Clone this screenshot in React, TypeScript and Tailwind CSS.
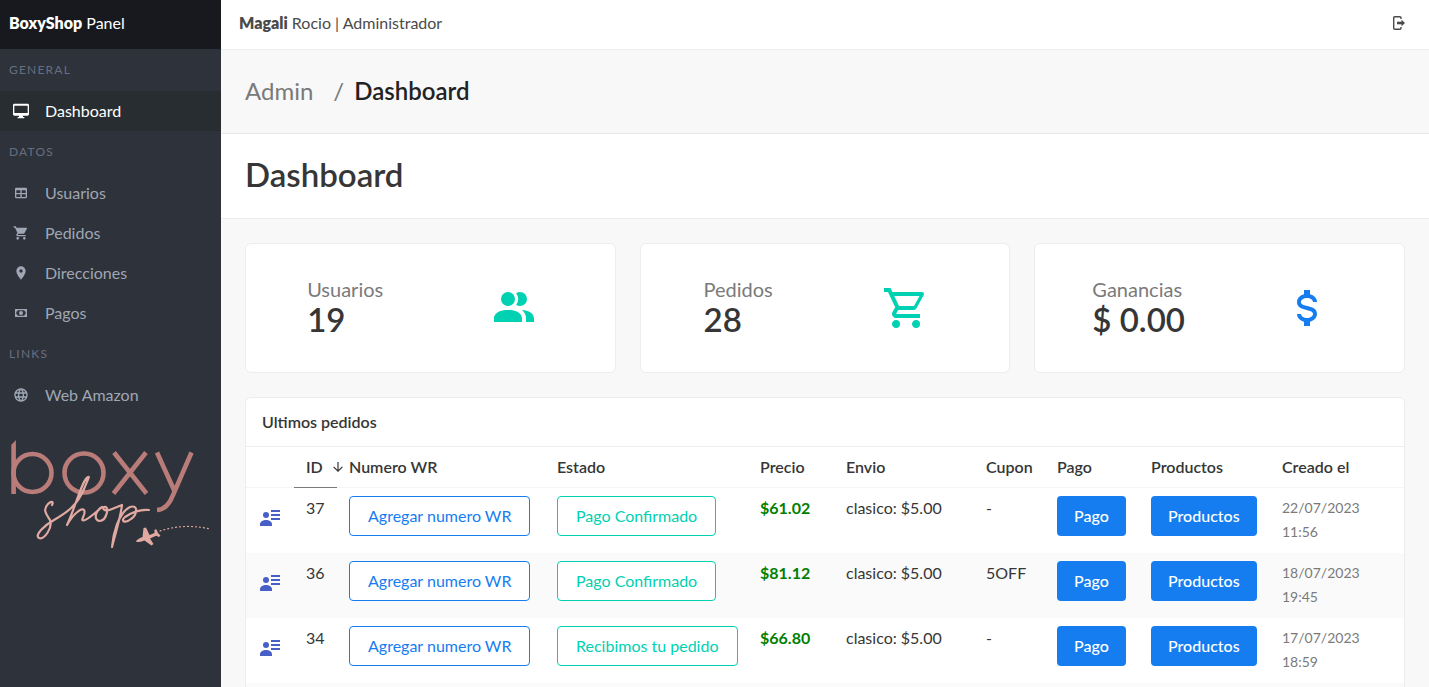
import type { ReactNode } from "react";
import { MdLanguage } from "react-icons/md";

const paths = {
  desktop:
    "M22,15H2V4H22M22,1H2C0.9,1 0,1.9 0,3V17A2,2 0 0,0 2,19H9V21H7V23H17V21H15V19H22A2,2 0 0,0 24,17V3C24,1.9 23.1,1 22,1Z",
  table:
    "M5,4H19A2,2 0 0,1 21,6V18A2,2 0 0,1 19,20H5A2,2 0 0,1 3,18V6A2,2 0 0,1 5,4M5,8V12H11V8H5M13,8V12H19V8H13M5,14V18H11V14H5M13,14V18H19V14H13Z",
  cart: "M17,18C15.89,18 15,18.89 15,20A2,2 0 0,0 17,22A2,2 0 0,0 19,20C19,18.89 18.1,18 17,18M1,2V4H3L6.6,11.59L5.24,14.04C5.09,14.32 5,14.65 5,15A2,2 0 0,0 7,17H19V15H7.42A0.25,0.25 0 0,1 7.17,14.75C7.17,14.7 7.18,14.66 7.2,14.63L8.1,13H15.55C16.3,13 16.96,12.58 17.3,11.97L20.88,5.5C20.95,5.34 21,5.17 21,5A1,1 0 0,0 20,4H5.21L4.27,2M7,18C5.89,18 5,18.89 5,20A2,2 0 0,0 7,22A2,2 0 0,0 9,20C9,18.89 8.1,18 7,18Z",
  marker:
    "M12,11.5A2.5,2.5 0 0,1 9.5,9A2.5,2.5 0 0,1 12,6.5A2.5,2.5 0 0,1 14.5,9A2.5,2.5 0 0,1 12,11.5M12,2A7,7 0 0,0 5,9C5,14.25 12,22 12,22C12,22 19,14.25 19,9A7,7 0 0,0 12,2Z",
  cash: "M3,6H21V18H3V6M12,9A3,3 0 0,1 15,12A3,3 0 0,1 12,15A3,3 0 0,1 9,12A3,3 0 0,1 12,9M7,8A2,2 0 0,1 5,10V14A2,2 0 0,1 7,16H17A2,2 0 0,1 19,14V10A2,2 0 0,1 17,8H7Z",
  users:
    "M16 17V19H2V17S2 13 9 13 16 17 16 17M12.5 7.5A3.5 3.5 0 1 0 9 11A3.5 3.5 0 0 0 12.5 7.5M15.94 13A5.32 5.32 0 0 1 18 17V19H22V17S22 13.37 15.94 13M15 4A3.39 3.39 0 0 0 13.07 4.59A5 5 0 0 1 13.07 10.41A3.39 3.39 0 0 0 15 11A3.5 3.5 0 0 0 15 4Z",
  cartOutline:
    "M17,18A2,2 0 0,1 19,20A2,2 0 0,1 17,22C15.89,22 15,21.1 15,20C15,18.89 15.89,18 17,18M1,2H4.27L5.21,4H20A1,1 0 0,1 21,5C21,5.17 20.95,5.34 20.88,5.5L17.3,11.97C16.96,12.58 16.3,13 15.55,13H8.1L7.2,14.63L7.17,14.75A0.25,0.25 0 0,0 7.42,15H19V17H7C5.89,17 5,16.1 5,15C5,14.65 5.09,14.32 5.24,14.04L6.6,11.59L3,4H1V2M7,18A2,2 0 0,1 9,20A2,2 0 0,1 7,22C5.89,22 5,21.1 5,20C5,18.89 5.89,18 7,18M16,11L18.78,6H6.14L8.5,11H16Z",
  dollar:
    "M7,15H9C9,16.08 10.37,17 12,17C13.63,17 15,16.08 15,15C15,13.9 13.96,13.5 11.76,12.97C9.64,12.44 7,11.78 7,9C7,7.21 8.47,5.69 10.5,5.18V3H13.5V5.18C15.53,5.69 17,7.21 17,9H15C15,7.92 13.63,7 12,7C10.37,7 9,7.92 9,9C9,10.1 10.04,10.5 12.24,11.03C14.36,11.56 17,12.22 17,15C17,16.79 15.53,18.31 13.5,18.82V21H10.5V18.82C8.47,18.31 7,16.79 7,15Z",
};

type IconName = keyof typeof paths;

function Icon({ name, className }: { name: IconName; className: string }) {
  return (
    <svg viewBox="0 0 24 24" fill="currentColor" aria-hidden="true" className={className}>
      <path fillRule="evenodd" d={paths[name]} />
    </svg>
  );
}

function LogoutIcon() {
  return (
    <svg viewBox="0 0 14 16" className="h-4 w-3.5" fill="none" stroke="currentColor" aria-hidden="true">
      <path d="M9 4V2.8Q9 1.7 7.9 1.7H2.8Q1.7 1.7 1.7 2.8V13.2Q1.7 14.3 2.8 14.3H7.9Q9 14.3 9 13.2V12" strokeWidth="1.4" />
      <path d="M5 8H10" strokeWidth="2.6" />
      <path d="M9.5 4.8L13 8L9.5 11.2Z" fill="currentColor" stroke="none" />
    </svg>
  );
}

function DetailsIcon() {
  return (
    <svg viewBox="0 0 20 16" className="h-4 w-5" fill="currentColor" aria-hidden="true">
      <circle cx="6" cy="5" r="3" />
      <path d="M0 16V14.2C0 11.6 3 10 6 10S12 11.6 12 14.2V16Z" />
      <path d="M11 0H20V2H11ZM11 4H20V6H11ZM11 8H20V10H11Z" />
    </svg>
  );
}

function SortArrow() {
  return (
    <svg viewBox="0 0 10 10" className="h-2.5 w-2.5" fill="none" stroke="currentColor" strokeWidth="1.2" aria-hidden="true">
      <path d="M5 0V9M0.6 4.8L5 9.2L9.4 4.8" />
    </svg>
  );
}

function Logo() {
  return (
    <svg viewBox="0 5 221 120" className="block w-full" role="img" aria-label="boxy shop">
      <g fill="none" stroke="#b97c79" strokeWidth="4.6">
        <path d="M13.6 64V14.5" />
        <circle cx="32.5" cy="43" r="19" />
        <circle cx="84" cy="43" r="19.5" />
        <path d="M114 22.500L146.500 63.500M146 22.500L113.500 63.500" />
        <path d="M157 22.500L174.500 61M191.500 22.500L173 65Q167.500 79.500 157 80" />
      </g>
      <path fill="#b97c79" d="M11.3 15L15.9 10V15Z" />
      <g fill="none" stroke="#e0aaa2" strokeLinecap="round" strokeLinejoin="round">
        <path
          strokeWidth="2.2"
          d="M52 75C54 71 51 71 48 74C42 80 47 85 50 90C53 98 44 110 39 108C34 105 45 95 54 90C66 83 77 76 84 59C88 49 90 46 88 47C82 50 77 73 67 95C73 84 82 77 84 80C87 84 78 92 85 90C90 88 96 82 102 77C94 82 94 91 100 91C107 90 110 75 104 77C101 79 106 82 112 79L122 75C120 90 116 101 112 117C113 105 118 83 130 77C139 74 137 85 131 89C125 94 120 91 125 87C131 83 139 79 149 80"
        />
        <path d="M160 101Q184 93 210 99" strokeWidth="1.2" strokeDasharray="1 3" />
      </g>
      <path
        fill="#e0aaa2"
        d="M136 111.500Q137 109 142.500 107L143.500 98L146 97.500L149.500 105L154.500 103L154.500 99.500L156.500 99.500L158 103L160.500 105.500L159 107L156 105.800L150 108.500L153.500 114L151.500 115.500L144.500 110.500Q138 113 136 111.500Z"
      />
    </svg>
  );
}

function NavSection({ title, children }: { title: string; children: ReactNode }) {
  return (
    <section>
      <h2 className="px-[9px] py-3 text-xs leading-[18px] tracking-widest text-[#666f80] uppercase">{title}</h2>
      <ul>{children}</ul>
    </section>
  );
}

function NavItem({ icon, label, active = false }: { icon: ReactNode; label: string; active?: boolean }) {
  return (
    <li>
      <a
        href="#"
        aria-current={active ? "page" : undefined}
        className={
          active ? "flex h-10 items-center bg-[#282d32] text-white" : "flex h-10 items-center text-[#9fa7b5]"
        }
      >
        <span className="flex w-[45px] pl-[13px]">{icon}</span>
        {label}
      </a>
    </li>
  );
}

function StatCard({ label, value, icon, tint }: { label: string; value: string; icon: IconName; tint: string }) {
  return (
    <article className="flex h-[130px] items-center justify-around rounded-md border border-[#ededed] bg-white px-4">
      <div className="pb-0.5">
        <h3 className="text-xl leading-6 text-[#7a7a7a]">{label}</h3>
        <p className="text-[33px] leading-9 font-semibold text-[#363636]">{value}</p>
      </div>
      <span className={"flex w-20 justify-center " + tint}>
        <Icon name={icon} className="size-12" />
      </span>
    </article>
  );
}

const orders = [
  { id: 37, state: "Pago Confirmado", price: "$61.02", coupon: "-", date: "22/07/2023", time: "11:56" },
  { id: 36, state: "Pago Confirmado", price: "$81.12", coupon: "5OFF", date: "18/07/2023", time: "19:45" },
  { id: 34, state: "Recibimos tu pedido", price: "$66.80", coupon: "-", date: "17/07/2023", time: "18:59" },
];

const th = "px-3 py-2 font-semibold";
const td = "px-3 py-2";
const solid = "h-10 rounded bg-[#167df0] px-[17px] pb-px font-medium text-white";
const outline = "h-10 rounded border bg-white px-[18px] pb-px whitespace-nowrap";

export default function App() {
  return (
    <div className="flex h-screen overflow-hidden bg-[#f8f8f8] font-['Lato',sans-serif] text-base leading-6 text-[#363636]">
      <aside className="w-[221px] shrink-0 bg-[#2e323a]">
        <div className="flex h-[49px] items-center bg-[#17191e] px-[9px] pb-1 text-white">
          <p>
            <b className="font-extrabold">BoxyShop</b> Panel
          </p>
        </div>
        <nav aria-label="Principal">
          <NavSection title="General">
            <NavItem active label="Dashboard" icon={<Icon name="desktop" className="size-4" />} />
          </NavSection>
          <NavSection title="Datos">
            <NavItem label="Usuarios" icon={<Icon name="table" className="size-4" />} />
            <NavItem label="Pedidos" icon={<Icon name="cart" className="size-4" />} />
            <NavItem label="Direcciones" icon={<Icon name="marker" className="size-4" />} />
            <NavItem label="Pagos" icon={<Icon name="cash" className="size-4" />} />
          </NavSection>
          <NavSection title="Links">
            <NavItem label="Web Amazon" icon={<MdLanguage className="size-4" />} />
          </NavSection>
        </nav>
        <div className="pt-5">
          <Logo />
        </div>
      </aside>

      <div className="min-w-0 flex-1">
        <header className="flex h-[50px] items-center justify-between border-b border-[#ededed] bg-white pr-[23px] pb-1 pl-[18px] text-[#4a4a4a]">
          <p>
            <b className="font-extrabold">Magali</b> Rocio | Administrador
          </p>
          <button type="button" aria-label="Salir">
            <LogoutIcon />
          </button>
        </header>

        <nav aria-label="Ruta" className="flex h-[84px] items-center border-b border-[#e8e8e8] px-6 pb-0.5">
          <ol className="flex gap-5 text-2xl leading-8 text-[#7a7a7a]">
            <li>
              <a href="#">Admin</a>
            </li>
            <li className="flex gap-2.5 font-semibold text-[#222]">
              <span className="font-normal text-[#7a7a7a]">/</span>
              Dashboard
            </li>
          </ol>
        </nav>

        <div className="flex h-[85px] items-center border-b border-[#ededed] bg-white px-6 pb-1">
          <h1 className="text-[33px] leading-9 font-semibold">Dashboard</h1>
        </div>

        <main className="p-6">
          <div className="grid grid-cols-3 gap-6">
            <StatCard label="Usuarios" value="19" icon="users" tint="text-[#00d1b2]" />
            <StatCard label="Pedidos" value="28" icon="cartOutline" tint="text-[#00d1b2]" />
            <StatCard label="Ganancias" value="$ 0.00" icon="dollar" tint="text-[#167df0]" />
          </div>

          <section className="mt-6 rounded-md border border-[#ededed] bg-white">
            <h2 className="border-b border-[#ededed] px-4 py-3 font-semibold">Ultimos pedidos</h2>
            <table className="w-full table-fixed border-separate border-spacing-0 text-left">
              <colgroup>
                <col className="w-[48px]" />
                <col className="w-[43px]" />
                <col className="w-[208px]" />
                <col className="w-[203px]" />
                <col className="w-[86px]" />
                <col className="w-[140px]" />
                <col className="w-[71px]" />
                <col className="w-[94px]" />
                <col className="w-[131px]" />
                <col />
              </colgroup>
              <thead>
                <tr className="[&>th]:border-b [&>th]:border-[#f5f5f5]">
                  <th className={th} aria-label="Detalle" />
                  <th className={th + " border-[#7a7a7a]!"} aria-sort="descending">
                    <span className="flex items-center gap-2.5">
                      ID
                      <span className="shrink-0">
                        <SortArrow />
                      </span>
                    </span>
                  </th>
                  <th className={th}>Numero WR</th>
                  <th className={th}>Estado</th>
                  <th className={th}>Precio</th>
                  <th className={th}>Envio</th>
                  <th className={th}>Cupon</th>
                  <th className={th}>Pago</th>
                  <th className={th}>Productos</th>
                  <th className={th}>Creado el</th>
                </tr>
              </thead>
              <tbody>
                {orders.map((o) => (
                  <tr key={o.id} className="h-[65px] align-top even:bg-[#fafafa]">
                    <td className="px-3 pt-[22px]">
                      <a href="#" aria-label={"Ver pedido " + o.id} className="block pl-[2px] text-[#485fc7]">
                        <DetailsIcon />
                      </a>
                    </td>
                    <td className={td}>{o.id}</td>
                    <td className={td}>
                      <button type="button" className={outline + " border-[#167df0] text-[#167df0]"}>
                        Agregar numero WR
                      </button>
                    </td>
                    <td className={td}>
                      <button type="button" className={outline + " border-[#00d1b2] text-[#00d1b2]"}>
                        {o.state}
                      </button>
                    </td>
                    <td className={td + " font-bold text-[#008000]"}>{o.price}</td>
                    <td className={td}>clasico: $5.00</td>
                    <td className={td}>{o.coupon}</td>
                    <td className={td}>
                      <button type="button" className={solid}>
                        Pago
                      </button>
                    </td>
                    <td className={td}>
                      <button type="button" className={solid}>
                        Productos
                      </button>
                    </td>
                    <td className={td + " text-sm leading-6 text-[#7a7a7a]"}>
                      {o.date}
                      <br />
                      {o.time}
                    </td>
                  </tr>
                ))}
                <tr className="h-[65px] even:bg-[#fafafa]" aria-hidden="true">
                  <td colSpan={10} />
                </tr>
              </tbody>
            </table>
          </section>
        </main>
      </div>
    </div>
  );
}
